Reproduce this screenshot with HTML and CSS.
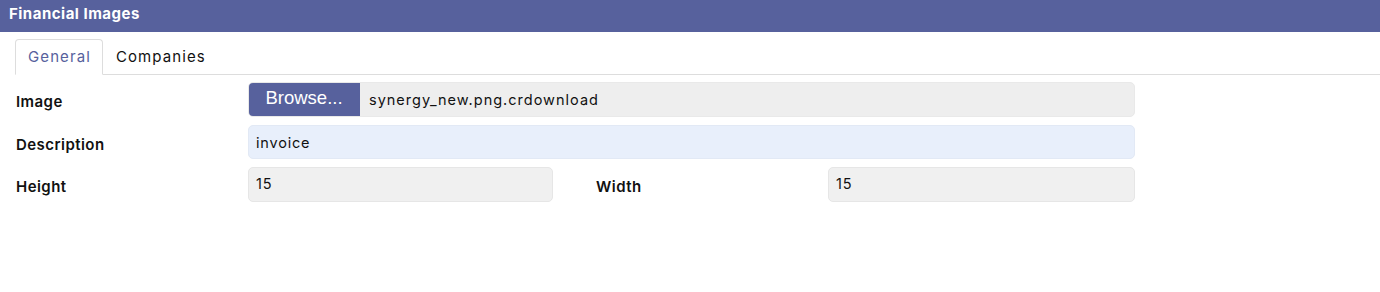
FILE: index.html
```html
<!DOCTYPE html>
<html lang="en">

<head>
    <meta charset="UTF-8">
    <title>Financial Images</title>
    <link rel="stylesheet" href="styles.css">
</head>

<body>
    <div class="panel-header">Financial Images</div>

    <div class="tabs">
        <div class="tab active">General</div>
        <div class="tab">Companies</div>
    </div>

    <form class="form">
        <div class="row">
            <label>Image</label>
            <div class="file-input">
                <span class="browse">Browse...</span>
                <span class="file-name">synergy_new.png.crdownload</span>
            </div>
        </div>

        <div class="row">
            <label>Description</label>
            <input type="text" class="field autofill" value="invoice">
        </div>

        <div class="row">
            <label>Height</label>
            <input type="text" class="field half" value="15">
            <label class="second">Width</label>
            <input type="text" class="field half wide" value="15">
        </div>
    </form>
</body>

</html>
```

FILE: styles.css
```css
:root {
    --brand: #57619d;
    --text: #111111;
    --field-bg: #f0f0f0;
    --field-border: #e6e6e6;
    --autofill-bg: #e8effb;
    --line: #dddddd;
}

body {
    margin: 0;
    font-family: 'Inter', 'Liberation Sans', sans-serif;
    color: var(--text);
    background: #ffffff;
}

.panel-header {
    background-color: var(--brand);
    color: #ffffff;
    height: 32px;
    line-height: 27px;
    padding-left: 9px;
    font-size: 15px;
    font-weight: 700;
    letter-spacing: 0.5px;
}

.tabs {
    display: flex;
    margin: 7px 0 0 15px;
    border-bottom: 1px solid var(--line);
    height: 35px;
}

.tab {
    padding: 0 12px;
    font-size: 15px;
    letter-spacing: 1.1px;
    line-height: 34px;
    margin-bottom: -1px;
    border: 1px solid transparent;
    border-radius: 4px 4px 0 0;
}

.tab.active {
    color: var(--brand);
    border-color: var(--line);
    border-bottom-color: #ffffff;
    background: #ffffff;
    padding-right: 11px;
}

.form {
    padding: 7px 0 0 16px;
    width: 1119px;
}

.row {
    display: flex;
    align-items: center;
    margin-bottom: 8px;
}

.row label {
    width: 232px;
    flex: none;
    font-size: 15px;
    font-weight: 600;
    letter-spacing: 0.45px;
    padding-top: 4px;
}

.row label.second {
    margin-left: 43px;
}

.file-input {
    flex: 1;
    display: flex;
    height: 35px;
    border-radius: 5px;
    overflow: hidden;
    background: #eeeeee;
    border: 1px solid #e9e9e9;
    box-sizing: border-box;
}

.browse {
    background: var(--brand);
    color: #ffffff;
    width: 112px;
    font-family: 'Liberation Sans', sans-serif;
    font-size: 18.5px;
    line-height: 32px;
    text-align: center;
    margin: -1px 0 -1px -1px;
}

.file-name {
    padding-left: 9px;
    font-size: 14.5px;
    letter-spacing: 1px;
    line-height: 33px;
}

.field {
    flex: 1;
    height: 35px;
    box-sizing: border-box;
    border: 1px solid var(--field-border);
    border-radius: 5px;
    background: var(--field-bg);
    font-family: inherit;
    font-size: 14.5px;
    letter-spacing: 0.8px;
    color: var(--text);
    padding: 0 7px;
    margin: 0;
}

.field.autofill {
    background: var(--autofill-bg);
    border-color: #e2e9f5;
    height: 34px;
}

.field.half {
    flex: none;
    width: 305px;
    padding-bottom: 3px;
}

.field.wide {
    width: 307px;
}
```
